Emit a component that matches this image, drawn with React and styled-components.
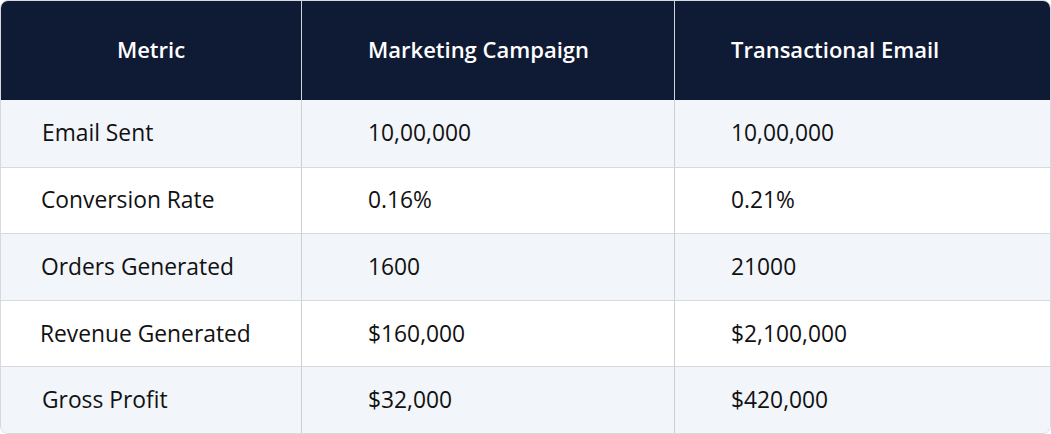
import React from "react";
import styled, { createGlobalStyle } from "styled-components";

const Global = createGlobalStyle`
  html, body { margin: 0; padding: 0; background: #ffffff; }
  body { font-family: "Open Sans", "Noto Sans", sans-serif; }
`;

const Table = styled.div`
  box-sizing: border-box;
  width: 1051px;
  height: 434px;
  border: 1px solid #d6d9de;
  border-radius: 8px;
  overflow: hidden;
  display: grid;
  grid-template-columns: 300px 373px 1fr;
  grid-template-rows: 99px repeat(5, 1fr);
  background: #ffffff;
`;

const HeadCell = styled.div`
  background: #0f1a34;
  color: #ffffff;
  font-weight: 600;
  font-size: 22px;
  display: flex;
  align-items: center;
  justify-content: ${(p) => (p.$center ? "center" : "flex-start")};
  padding-left: ${(p) => p.$pad || 0}px;
  padding-bottom: 4px;
  border-left: ${(p) => (p.$first ? "none" : "1px solid #cfd4dc")};
`;

const Cell = styled.div`
  background: ${(p) => (p.$alt ? "#f2f5fa" : "#ffffff")};
  color: #111111;
  font-size: 22.8px;
  display: flex;
  align-items: center;
  padding-left: ${(p) => p.$pad}px;
  padding-bottom: 1px;
  border-left: ${(p) => (p.$first ? "none" : "1px solid #cfcfcf")};
  border-top: ${(p) => (p.$top ? "none" : "1px solid #d6d9de")};
`;

const rows = [
  ["Email Sent", "10,00,000", "10,00,000", 41],
  ["Conversion Rate", "0.16%", "0.21%", 40],
  ["Orders Generated", "1600", "21000", 40],
  ["Revenue Generated", "$160,000", "$2,100,000", 39],
  ["Gross Profit", "$32,000", "$420,000", 41],
];

export default function App() {
  return (
    <>
      <Global />
      <Table>
        <HeadCell $first $center>Metric</HeadCell>
        <HeadCell $pad={66}>Marketing Campaign</HeadCell>
        <HeadCell $pad={56}>Transactional Email</HeadCell>
        {rows.map(([m, a, b, pad], i) => (
          <React.Fragment key={m}>
            <Cell $first $alt={i % 2 === 0} $top={i === 0} $pad={pad}>{m}</Cell>
            <Cell $alt={i % 2 === 0} $top={i === 0} $pad={66}>{a}</Cell>
            <Cell $alt={i % 2 === 0} $top={i === 0} $pad={56}>{b}</Cell>
          </React.Fragment>
        ))}
      </Table>
    </>
  );
}
